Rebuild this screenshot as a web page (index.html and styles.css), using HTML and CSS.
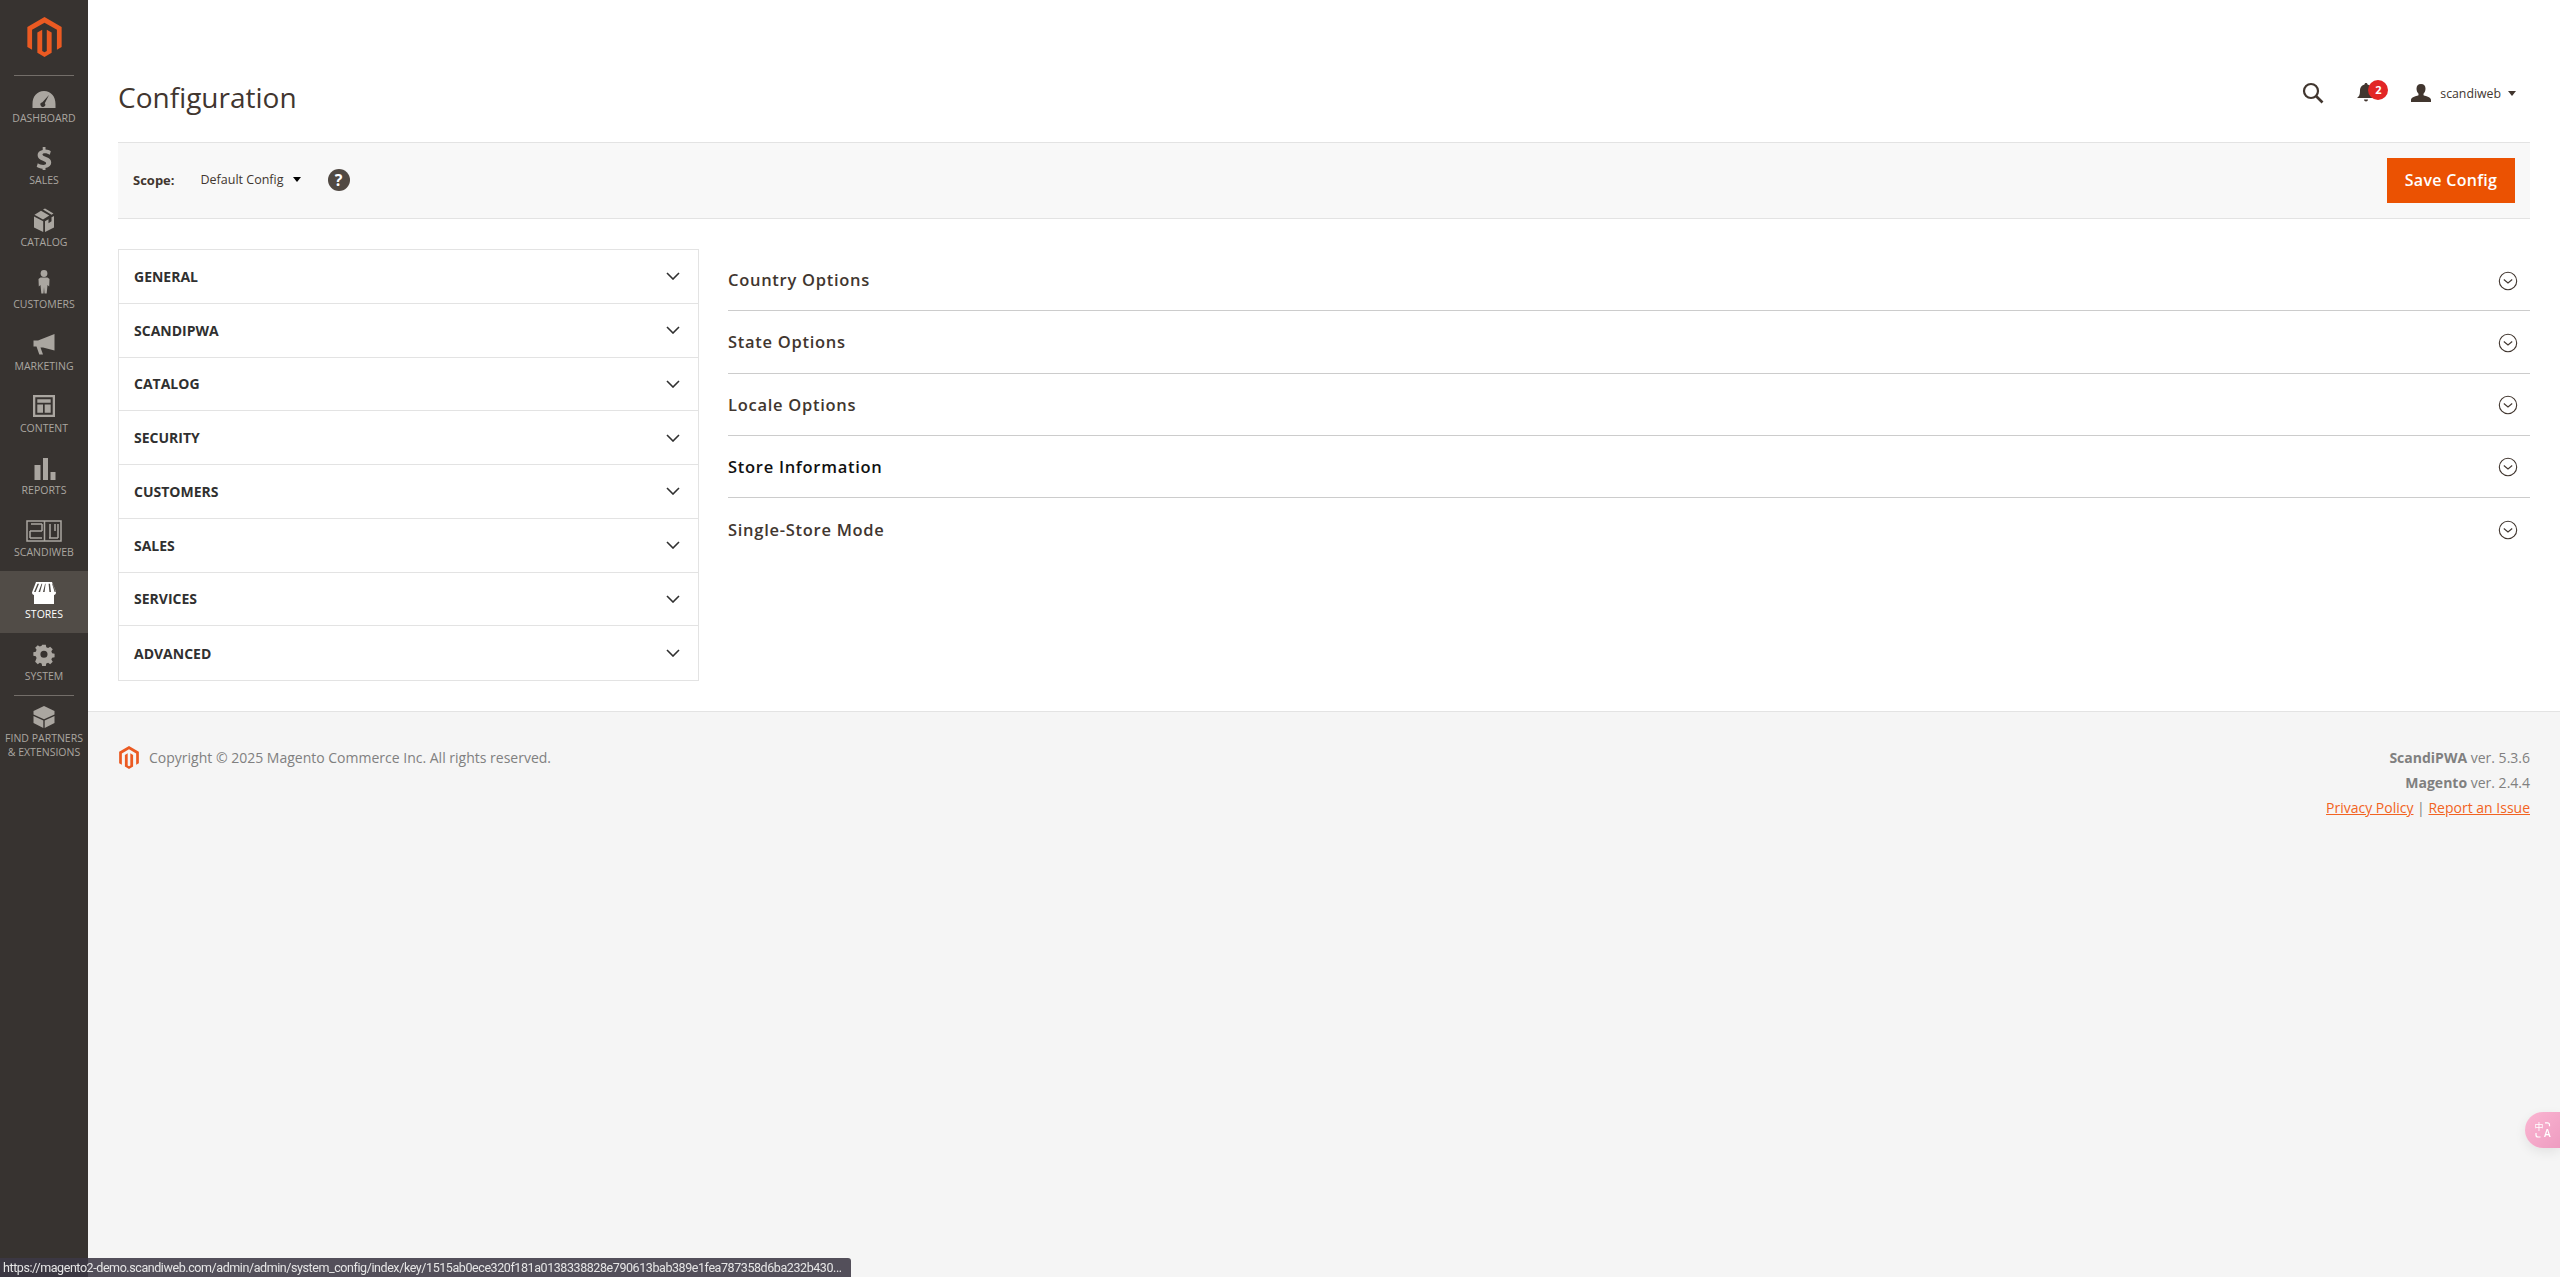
FILE: index.html
```html
<!DOCTYPE html>
<html lang="en">
<head>
<meta charset="utf-8">
<title>Configuration</title>
<link rel="stylesheet" href="styles.css">
</head>
<body>
<div class="app">
  <nav class="sidebar">
    <div class="logo-wrap">
      <svg class="logo" viewBox="0 0 24 28"><path fill="#eb5a22" d="M12 0 0 7v14l3.300 1.900V9l8.700-5 8.700 5v13.900L24 21V7z"/><path fill="#eb5a22" d="M13.600 23.800 12 24.700l-1.600-.9V8.900L7 10.900v14.200L12 28l5-2.900V10.900l-3.400-2z"/></svg>
    </div>
    <a class="nav-item"><svg class="ico" viewBox="0 0 24 24" preserveAspectRatio="xMidYMax meet"><path fill-rule="evenodd" d="M12 7C5 7 .5 12.500.5 20v4h23v-4C23.500 12.500 19 7 12 7zm5 4-4.200 8.200a2.400 2.400 0 1 1-2.400-1z"/></svg><span>Dashboard</span></a>
    <a class="nav-item"><svg class="ico" viewBox="0 0 24 24"><path d="M13.500 1v2.600c2.300.2 4 .9 5.300 1.600l-1 3.500c-1.300-.7-3.100-1.400-5-1.400-1.700 0-2.300.6-2.300 1.300 0 .9 1 1.400 3.600 2.300 3.600 1.300 5.100 3 5.100 5.700 0 2.800-2 4.800-5.700 5.300V25h-2.900v-2.300c-2.400-.2-4.500-.9-5.900-1.900l1.100-3.600c1.500 1 3.500 1.700 5.500 1.700 1.700 0 2.800-.6 2.800-1.700 0-1-.9-1.600-3.200-2.500-3.400-1.200-5.300-2.900-5.300-5.700 0-2.700 1.900-4.600 5.100-5.100V1z"/></svg><span>Sales</span></a>
    <a class="nav-item"><svg class="ico" viewBox="0 0 24 24"><path d="M2.500 6.800 9 2.700l8.300 4.700-6.300 4zM11 1.500 13 .4l8.500 5-2 1.300zM2 8.500l9.200 4.800V24L2 19.500zM13 13.300l3.500-2v4l3-2v-4L22 8v11.500L13 24z"/></svg><span>Catalog</span></a>
    <a class="nav-item"><svg class="ico" viewBox="0 0 24 24"><circle cx="12" cy="3.500" r="3.400"/><path d="M8.500 7.500h7l2 1.500-.3 7.500-1.700-1.500-.8 8.500h-2.200l-.5-6.500-.5 6.500H9.300l-.8-8.500-1.700 1.500L6.500 9z"/></svg><span>Customers</span></a>
    <a class="nav-item"><svg class="ico" viewBox="0 0 24 24" preserveAspectRatio="xMidYMax meet"><path d="M22.500 2v16.500L11 15.500H8.500l2.500 7H7.300L4.500 14.500H1.500V8.500H6z"/></svg><span>Marketing</span></a>
    <a class="nav-item"><svg class="ico" viewBox="0 0 24 24"><path fill-rule="evenodd" d="M1 1h22v22H1zm2.300 2.300v17.400h17.400V3.300zM5.300 5.300h13.400v3.400H5.300zm0 5.200h5.700v8.200H5.300zm7.400 0h6v8.200h-6z"/></svg><span>Content</span></a>
    <a class="nav-item"><svg class="ico" viewBox="0 0 24 24"><path d="M2.500 9h6v15h-6zM11 2h5v22h-5zM18.500 16H23.500v8h-5z"/></svg><span>Reports</span></a>
    <a class="nav-item"><svg class="ico ico-wide" viewBox="0 0 36 24"><path class="sw" d="M1 3h34v20H1zM4 13h12M5 6h11M4 20h12M16 6v7M4 13v7M18.500 3v20M24 6v10M29 6v7M32 6v10M23 20h9M32 16v4M24 16v4"/></svg><span>Scandiweb</span></a>
    <a class="nav-item nav-active"><svg class="ico" viewBox="0 0 24 24" preserveAspectRatio="xMidYMax meet"><path fill-rule="evenodd" d="M4 2h16l4 10.500c0 1.500-1 2.500-2 2.500v9H2v-9c-1 0-2-1-2-2.500zm1.500 1.800L2 12h1.600L7 3.800zm4 0L6.500 12h1.600l2.200-8.200zm3.600 0L11 12h1.600l1-8.200zm3.500 0 .8 8.200h1.600l-1-8.200zm3.500 0 2.500 8.200h1.500l-3.300-8.200z"/></svg><span>Stores</span></a>
    <a class="nav-item"><svg class="ico" viewBox="0 0 24 24"><path fill-rule="evenodd" d="M9.800 1h4.400l.6 3 2.200.9 2.500-1.700 3.100 3.100-1.700 2.500.9 2.200 3 .6v4.400l-3 .6-.9 2.200 1.700 2.500-3.100 3.100-2.500-1.700-2.200.9-.6 3H9.800l-.6-3-2.200-.9-2.500 1.700-3.100-3.100L3.100 17l-.9-2.200-3-.6V9.800l3-.6.9-2.200-1.700-2.500 3.100-3.100L7 3.100l2.200-.9zM12 8a4.300 4.300 0 1 0 0 8.600A4.300 4.300 0 0 0 12 8z" transform="translate(2 2) scale(.83)"/></svg><span>System</span></a>
    <div class="nav-divider"></div>
    <a class="nav-item nav-partners"><svg class="ico" viewBox="0 0 24 24"><path d="M12 2 22.500 7v3.500L12 15.300 1.500 10.500V7z"/><path d="M1.500 12 11.300 16.500V24L1.500 19zM22.500 12 12.700 16.500V24l9.800-5z"/></svg><span>Find Partners<br>&amp; Extensions</span></a>
  </nav>

  <div class="page">
    <div class="page-white">
      <header class="topbar">
        <h1 class="title">Configuration</h1>
        <div class="actions">
          <svg class="search" viewBox="0 0 22 22" fill="none"><circle cx="9" cy="9" r="7" stroke="#41362f" stroke-width="2.200"/><path d="M14 14l6.500 6.500" stroke="#41362f" stroke-width="2.600"/></svg>
          <div class="bell">
            <svg class="bell-ico" viewBox="0 0 18 20"><path fill="#41362f" d="M9 0c1 0 1.500.6 1.500 1.500C14 2.500 15 5 15 8c0 4 1 5.500 3 7H0c2-1.500 3-3 3-7 0-3 1-5.500 4.500-6.500C7.500.6 8 0 9 0zM7 16.500h4c0 1-1 2-2 2s-2-1-2-2z"/></svg>
            <span class="badge">2</span>
          </div>
          <div class="user">
            <svg class="user-ico" viewBox="0 0 20 18"><path fill="#41362f" d="M10 0c3 0 4.500 2 4.500 4.800 0 2.200-1 4-2 5v1.400c3 1 7.500 2 7.500 4.800v2H0v-2c0-2.800 4.500-3.800 7.500-4.800V9.800c-1-1-2-2.800-2-5C5.500 2 7 0 10 0z"/></svg>
            <span class="user-name">scandiweb</span>
            <span class="caret caret-dark"></span>
          </div>
        </div>
      </header>
      <div class="scope-bar">
        <div class="scope">
          <span class="scope-label">Scope:</span>
          <span class="scope-value">Default Config</span>
          <span class="caret"></span>
          <span class="help">?</span>
        </div>
        <button class="save" type="button">Save Config</button>
      </div>
      <main class="columns">
        <ul class="tabs">
          <li class="tab">General<svg class="chev" viewBox="0 0 14 8" fill="none"><path d="M1 1l6 6 6-6"/></svg></li>
          <li class="tab">ScandiPWA<svg class="chev" viewBox="0 0 14 8" fill="none"><path d="M1 1l6 6 6-6"/></svg></li>
          <li class="tab">Catalog<svg class="chev" viewBox="0 0 14 8" fill="none"><path d="M1 1l6 6 6-6"/></svg></li>
          <li class="tab">Security<svg class="chev" viewBox="0 0 14 8" fill="none"><path d="M1 1l6 6 6-6"/></svg></li>
          <li class="tab">Customers<svg class="chev" viewBox="0 0 14 8" fill="none"><path d="M1 1l6 6 6-6"/></svg></li>
          <li class="tab">Sales<svg class="chev" viewBox="0 0 14 8" fill="none"><path d="M1 1l6 6 6-6"/></svg></li>
          <li class="tab">Services<svg class="chev" viewBox="0 0 14 8" fill="none"><path d="M1 1l6 6 6-6"/></svg></li>
          <li class="tab">Advanced<svg class="chev" viewBox="0 0 14 8" fill="none"><path d="M1 1l6 6 6-6"/></svg></li>
        </ul>
        <div class="sections">
          <div class="section">Country Options<svg class="circ" viewBox="0 0 20 20" fill="none"><circle cx="10" cy="10" r="8.700"/><path d="M5.800 8.500 10 12l4.200-3.500"/></svg></div>
          <div class="section">State Options<svg class="circ" viewBox="0 0 20 20" fill="none"><circle cx="10" cy="10" r="8.700"/><path d="M5.800 8.500 10 12l4.200-3.500"/></svg></div>
          <div class="section">Locale Options<svg class="circ" viewBox="0 0 20 20" fill="none"><circle cx="10" cy="10" r="8.700"/><path d="M5.800 8.500 10 12l4.200-3.500"/></svg></div>
          <div class="section section-strong">Store Information<svg class="circ" viewBox="0 0 20 20" fill="none"><circle cx="10" cy="10" r="8.700"/><path d="M5.800 8.500 10 12l4.200-3.500"/></svg></div>
          <div class="section section-last">Single-Store Mode<svg class="circ" viewBox="0 0 20 20" fill="none"><circle cx="10" cy="10" r="8.700"/><path d="M5.800 8.500 10 12l4.200-3.500"/></svg></div>
        </div>
      </main>
    </div>
    <footer class="footer">
      <div class="copyright">
        <svg class="foot-logo" viewBox="0 0 24 28"><path fill="#eb5a22" d="M12 0 0 7v14l3.300 1.900V9l8.700-5 8.700 5v13.900L24 21V7z"/><path fill="#eb5a22" d="M13.600 23.800 12 24.700l-1.600-.9V8.900L7 10.900v14.200L12 28l5-2.900V10.900l-3.400-2z"/></svg>
        <span>Copyright © 2025 Magento Commerce Inc. All rights reserved.</span>
      </div>
      <div class="versions">
        <div class="ver"><b>ScandiPWA</b> ver. 5.3.6</div>
        <div class="ver"><b>Magento</b> ver. 2.4.4</div>
        <div class="ver-links"><a>Privacy Policy</a> | <a>Report an Issue</a></div>
      </div>
    </footer>
  </div>
</div>
<div class="status-bar">https://magento2-demo.scandiweb.com/admin/admin/system_config/index/key/1515ab0ece320f181a0138338828e790613bab389e1fea787358d6ba232b430...</div>
<div class="translate">
  <span class="t-icon">
    <svg class="t-arcs" viewBox="0 0 16 16" fill="none"><path d="M10 .8h2.500a2 2 0 0 1 2 2v1.500M1 11v2a2 2 0 0 0 2 2h2.500"/></svg>
    <span class="t-zh">中</span>
    <span class="t-en">A</span>
  </span>
</div>
</body>
</html>
```

FILE: styles.css
```css
* { box-sizing: border-box; }
html, body { margin: 0; height: 100%; }
body { font-family: "Open Sans", sans-serif; color: #303030; background: #f5f5f5; overflow: hidden; }
.app { display: flex; height: 1277px; }

.sidebar { width: 88px; flex: none; background: #373330; display: flex; flex-direction: column; align-items: stretch; }
.logo-wrap { height: 75px; padding-top: 17px; display: flex; justify-content: center; position: relative; flex: none; }
.logo-wrap::after { content: ""; position: absolute; left: 14px; right: 14px; bottom: -1px; height: 1px; background: #736e69; }
.logo { width: 35px; height: 40px; }
.nav-item { height: 62px; flex: none; display: flex; flex-direction: column; align-items: center; justify-content: flex-start; padding-top: 9px; color: #aaa6a0; font-size: 10.500px; line-height: 14px; text-transform: uppercase; text-align: center; }
.ico { width: 24px; height: 24px; fill: #aaa6a0; display: block; margin-bottom: 3px; flex: none; }
.ico-wide { width: 36px; }
.sw { fill: none; stroke: #aaa6a0; stroke-width: 1.500; }
.nav-active { background: #514c47; color: #fff; }
.nav-active .ico { fill: #fff; }
.nav-divider { height: 1px; margin: 0 14px; background: #736e69; flex: none; }
.nav-partners { height: auto; padding-top: 8px; }

.page { flex: 1; display: flex; flex-direction: column; min-width: 0; }
.page-white { background: #fff; padding: 0 30px; height: 711px; flex: none; }
.topbar { height: 142px; display: flex; justify-content: space-between; align-items: flex-start; }
.title { margin: 78px 0 0; font-size: 28px; line-height: 38px; font-weight: 400; color: #41362f; }
.actions { display: flex; align-items: center; margin-top: 81px; height: 24px; padding-right: 14px; }
.search { width: 22px; height: 22px; margin-right: 33px; }
.bell { position: relative; width: 20px; height: 20px; margin-right: 34px; }
.bell-ico { width: 18px; height: 20px; display: block; }
.badge { position: absolute; left: 11px; top: -3px; width: 20px; height: 20px; border-radius: 50%; background: #e22626; color: #fff; font-size: 11px; line-height: 20px; font-weight: 700; text-align: center; }
.user { display: flex; align-items: center; }
.user-ico { width: 20px; height: 18px; margin-right: 9px; }
.user-name { font-size: 12.300px; color: #41362f; margin-right: 7px; }
.caret { width: 0; height: 0; border: 4px solid transparent; border-top: 5px solid #000; border-bottom: 0; display: inline-block; }
.caret-dark { border-top-color: #41362f; }

.scope-bar { height: 77px; background: #f8f8f8; border-top: 1px solid #e3e3e3; border-bottom: 1px solid #e3e3e3; display: flex; align-items: center; justify-content: space-between; padding: 0 15px; }
.scope { display: flex; align-items: center; padding-bottom: 2px; }
.scope-label { font-size: 13px; font-weight: 700; margin-right: 26px; color: #41362f; }
.scope-value { font-size: 12.500px; color: #41362f; margin-right: 9px; }
.help { width: 22px; height: 22px; margin-left: 27px; border-radius: 50%; background: #514943; color: #fff; font-size: 16px; font-weight: 700; line-height: 22px; text-align: center; }
.save { width: 128px; height: 45px; border: 0; background: #eb5202; color: #fff; font-family: "Open Sans", sans-serif; font-size: 16px; font-weight: 600; letter-spacing: .3px; padding: 0 0 2px; }

.columns { display: flex; align-items: flex-start; gap: 29px; padding-top: 30px; }
.tabs { list-style: none; margin: 0; padding: 0; width: 581px; flex: none; border: 1px solid #e3e3e3; }
.tab { height: 53.750px; border-bottom: 1px solid #e3e3e3; display: flex; align-items: center; justify-content: space-between; padding: 0 18px 0 15px; font-size: 14px; font-weight: 700; text-transform: uppercase; color: #303030; }
.tab:last-child { border-bottom: 0; }
.chev { width: 14px; height: 8px; stroke: #303030; stroke-width: 1.600; }
.sections { flex: 1; min-width: 0; }
.section { height: 62.250px; border-bottom: 1px solid #ccc; display: flex; align-items: center; justify-content: space-between; padding-right: 12px; font-size: 16.500px; font-weight: 600; letter-spacing: .72px; color: #41362f; }
.section-strong { color: #111; }
.section-last { border-bottom: 0; }
.circ { width: 20px; height: 20px; margin-top: 2px; stroke: #41362f; stroke-width: 1.100; }

.footer { flex: 1; border-top: 1px solid #e3e3e3; background: #f5f5f5; padding: 33px 30px 0; display: flex; justify-content: space-between; align-items: flex-start; font-size: 14px; color: #808080; }
.copyright { display: flex; align-items: center; gap: 10px; padding: 1px 0 0 1px; }
.foot-logo { width: 20px; height: 23px; }
.versions { text-align: right; line-height: 25px; }
.ver-links a { color: #f26322; text-decoration: underline; }

.status-bar { position: fixed; left: 0; bottom: 0; width: 851px; height: 19px; padding: 0 3px; background: rgba(60, 56, 68, .88); border-top-right-radius: 3px; color: #e6e6e6; font-family: Roboto, sans-serif; font-size: 12.500px; letter-spacing: -.42px; line-height: 19px; white-space: nowrap; overflow: hidden; }
.translate { position: fixed; right: 0; top: 1112px; width: 35px; height: 36px; border-radius: 18px 0 0 18px; background: linear-gradient(135deg, #fbb6d2, #ee9cc1); box-shadow: 0 4px 12px rgba(0, 0, 0, .08); color: #fff; display: flex; align-items: center; justify-content: center; }
.t-icon { position: relative; width: 16px; height: 16px; display: block; }
.t-arcs { position: absolute; inset: 0; stroke: #fff; stroke-width: 1.200; }
.t-zh { position: absolute; left: 0; top: 0; font-family: "Noto Sans CJK SC", sans-serif; font-size: 9px; line-height: 9px; }
.t-en { position: absolute; right: 0; bottom: 0; font-family: "Open Sans", sans-serif; font-size: 10px; line-height: 10px; font-weight: 600; }
```
